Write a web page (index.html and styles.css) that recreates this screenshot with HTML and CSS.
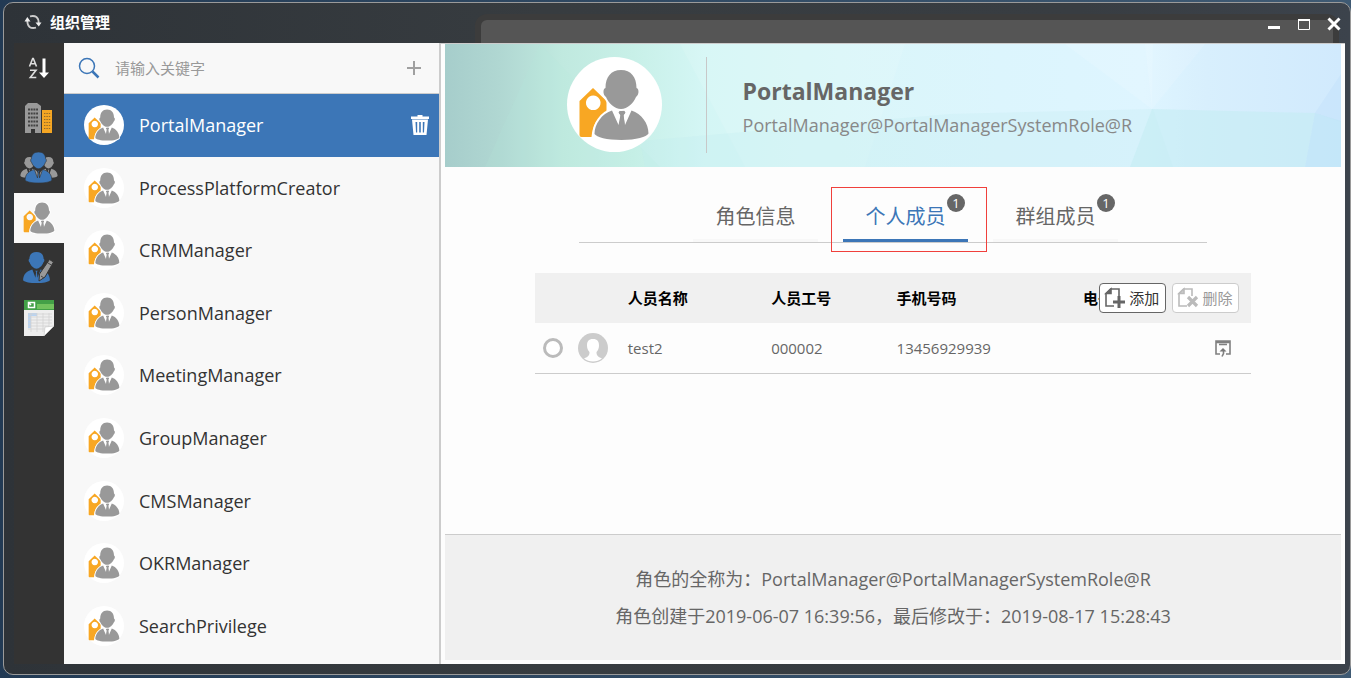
FILE: index.html
```html
<!DOCTYPE html>
<html lang="zh-CN">
<head>
<meta charset="utf-8">
<title>组织管理</title>
<link rel="stylesheet" href="styles.css">
</head>
<body>
<svg class="sprite" aria-hidden="true">
  <symbol id="person" viewBox="0 0 24 24">
    <path d="M12 0c3.700 0 5.500 2.200 5.500 5.300.9.300.7 2.300-.2 2.900C16.500 10.700 14 13 12 13s-4.500-2.300-5.300-4.800c-.9-.6-1.100-2.600-.2-2.900C6.500 2.200 8.300 0 12 0z"/>
    <path d="M8.800 13.500 11.200 20l.5-4.500-.7-1h2l-.7 1 .5 4.500 2.400-6.500c4.500 1.300 7 3.500 7.200 8.300-1.500 1.600-5.500 2.200-10.400 2.200S3 23.400 1.600 21.800c.2-4.800 2.700-7 7.200-8.300z"/>
  </symbol>
  <symbol id="role" viewBox="11 11 71 72">
    <path fill="#f8a723" fill-rule="evenodd" d="M12 43 25.500 30 39 43v12c-9 4-14 12-15 24H14q-2 0-2-2zM25.700 37.500a7.300 7.300 0 1 0 .1 0z"/>
    <g fill="#999" stroke="#fff" stroke-width="4" paint-order="stroke">
      <path d="M44.500 52.500 51 67l2-10-2-2.500 1.500-2h4l1.500 2-2 2.500 1.500 10L64 52.500c10 3 17 13 17 23C79 79 69 82 54 82s-25-3-27-6c0-10 7.500-20.500 17.500-23.500z" />
      <path d="M53.500 12c10 0 15.500 7 15.500 18 3 1 2.500 7-.5 9C66 45 60 51 53.500 51S41 45 38.500 39c-3-2-3.500-8-.5-9 0-11 5.500-18 15.500-18z"/>
    </g>
    <path fill="#999" d="M52.500 53h4l1 2-1.500 2.500 1 8.500-2.500 4-2.500-4 1-8.500-1.500-2.500z"/>
  </symbol>
</svg>

<div class="window">
  <div class="backdrop"></div>
  <header class="titlebar">
    <svg class="refresh" viewBox="0 0 18 16" fill="none" stroke="#ccc" stroke-width="1.800">
      <path d="M6 2.300Q14.500.5 14.700 9M12 13.700Q3.500 15.500 3.300 7"/>
      <path d="M11.500 8.500h6L14.800 12.500zM.500 7.500h6L3.300 3z" fill="#eee" stroke="none"/>
    </svg>
    <h1>组织管理</h1>
    <div class="controls">
      <button aria-label="最小化"><svg viewBox="0 0 14 14"><path d="M1 10.500h12" stroke="#fff" stroke-width="3"/></svg></button>
      <button aria-label="最大化"><svg viewBox="0 0 14 14"><path d="M1 3h12" stroke="#fff" stroke-width="2"/><path d="M1.500 3v9.500h11V3" fill="none" stroke="#fff"/></svg></button>
      <button aria-label="关闭"><svg viewBox="0 0 14 14"><path d="M1.500 1.500l11 11M12.500 1.500l-11 11" stroke="#fff" stroke-width="3"/></svg></button>
    </div>
  </header>

  <div class="workspace">
    <nav class="rail">
      <button aria-label="排序"><svg viewBox="0 0 32 32"><g fill="none" stroke="#ddd" stroke-width="1.600"><path d="M6.500 14.500l3.200-8h.6l3.200 8M7.700 11.800h4.600M7 18.300h6L7.300 25.500h6"/></g><path d="M19.500 6.500h3v14H26l-5 5.500-5-5.500h3.500z" fill="#fff"/></svg></button>
      <button aria-label="公司"><svg viewBox="0 0 32 32"><path fill="#999" d="M2 4l3-3h9l4 3v27H2z"/><path d="M5 7.500h10M5 11.500h10M5 15.500h10M5 19.500h10M5 23.500h10" stroke="#444" stroke-width="1.800" stroke-dasharray="2 .7"/><path d="M8 27h4v4H8z" fill="#333"/><path fill="#f5a623" d="M19 8h10v23H19z"/><path d="M21 11.500h7M21 14.500h7M21 17.500h7M21 20.500h7M21 23.500h7M21 26.500h7" stroke="#333" stroke-dasharray="1.400 1" opacity=".5"/></svg></button>
      <button aria-label="群组"><svg class="wide" viewBox="0 0 40 32"><g fill="#999"><use href="#person" x="0" y="5" width="21" height="21"/><use href="#person" x="19" y="5" width="21" height="21"/></g><use href="#person" x="4" y="0" width="31" height="31" fill="#3c76b7" stroke="#333" stroke-width=".5"/></svg></button>
      <button class="active" aria-label="角色"><svg viewBox="0 0 32 32"><use href="#role"/></svg></button>
      <button aria-label="个人"><svg viewBox="0 0 32 32"><use href="#person" x="-2" y="0" width="31" height="31" fill="#3c76b7"/><path fill="#999" stroke="#333" d="M26.500 7.500l4 2.500-8.500 15-6 4 .5-7z"/><path d="M25 11l4 2.500M18 24l3 2" stroke="#444"/></svg></button>
      <button aria-label="导入"><svg class="sheet" viewBox="0 0 32 38"><path fill="#eee" d="M1 1h30v26l-10 10H1z"/><path fill="#43a047" d="M1 1h30v10H1z"/><path fill="#72c25e" d="M14 5h17v5H14z"/><path d="M5.500 3.500h6v5h-6zM5 3l3 3" fill="none" stroke="#fff" stroke-width="1.500"/><path fill="#b8d4f4" d="M5 14h9v3H8v12H5z"/><path d="M5 15h24M5 18h24M5 21h24M5 24h24M5 27h21M5 30h17M8 14v19M14 14v19M20 14v19M26 14v14" stroke="#d2d2d2" stroke-width=".8"/><path fill="#fff" stroke="#bbb" stroke-width=".5" d="M31 27l-9 1-1 9z"/></svg></button>
    </nav>

    <aside class="roles">
      <form class="search">
        <button type="button" aria-label="搜索"><svg viewBox="0 0 22 22" fill="none" stroke="#3c76b7"><circle cx="9" cy="9" r="7.500" stroke-width="1.500"/><path d="M14.500 14.500l6 6" stroke-width="2.500"/></svg></button>
        <input type="text" aria-label="关键字" placeholder="请输入关键字">
        <button type="button" aria-label="新建"><svg viewBox="0 0 22 22"><path d="M11 4v14M4 11h14" stroke="#a0a0a0" stroke-width="2"/></svg></button>
      </form>
      <ul class="role-list">
        <li class="selected"><span class="avatar"><svg><use href="#role"/></svg></span><a href="#">PortalManager</a><button aria-label="删除角色"><svg viewBox="0 0 20 22"><path fill="#fff" fill-rule="evenodd" d="M7.500 1h5v1.500H19V5H1V2.500h6.500zM2 5.500h16L16.500 21h-13zM5.500 8l.5 10.500h1.200V8zM9.200 8v10.500h1.600V8zM12.800 8v10.500H14l.5-10.500z"/></svg></button></li>
        <li><span class="avatar"><svg><use href="#role"/></svg></span><a href="#">ProcessPlatformCreator</a></li>
        <li><span class="avatar"><svg><use href="#role"/></svg></span><a href="#">CRMManager</a></li>
        <li><span class="avatar"><svg><use href="#role"/></svg></span><a href="#">PersonManager</a></li>
        <li><span class="avatar"><svg><use href="#role"/></svg></span><a href="#">MeetingManager</a></li>
        <li><span class="avatar"><svg><use href="#role"/></svg></span><a href="#">GroupManager</a></li>
        <li><span class="avatar"><svg><use href="#role"/></svg></span><a href="#">CMSManager</a></li>
        <li><span class="avatar"><svg><use href="#role"/></svg></span><a href="#">OKRManager</a></li>
        <li><span class="avatar"><svg><use href="#role"/></svg></span><a href="#">SearchPrivilege</a></li>
      </ul>
    </aside>

    <main class="detail">
      <section class="banner">
        <svg class="facets" viewBox="0 0 896 123" preserveAspectRatio="none" aria-hidden="true">
          <path fill="#b5e8dd" opacity=".15" d="M95 0L215 123H40z"/>
          <path fill="#fff" opacity=".1" d="M235 0h225l-40 123H300z"/>
          <path fill="#bfeaf0" opacity=".25" d="M195 97l230-20 80-7 203-5 20 58H200z"/>
          <path fill="#fff" opacity=".12" d="M620 0h88l-1 65z"/>
          <path fill="#fff" opacity=".12" d="M700 0h60l-53 65z"/>
          <path fill="#c4edf3" opacity=".6" d="M707 65l163 4-10 54H685z"/>
          <path fill="#c3e2fc" opacity=".5" d="M896 30v48l-26-9z"/>
          <path fill="#bfe6f7" opacity=".7" d="M870 69l26 8v46h-36z"/>
        </svg>
        <div class="banner-content">
          <span class="portrait"><svg><use href="#role"/></svg></span>
          <div class="identity">
            <h2>PortalManager</h2>
            <p>PortalManager@PortalManagerSystemRole@R</p>
          </div>
        </div>
      </section>

      <div class="tabs" role="tablist">
        <button role="tab">角色信息</button>
        <button role="tab" class="active" aria-selected="true">个人成员<span class="badge">1</span></button>
        <button role="tab">群组成员<span class="badge">1</span></button>
      </div>

      <section class="members">
        <table>
          <thead>
            <tr><th class="col-pick"></th><th class="col-face"></th><th class="col-name">人员名称</th><th class="col-id">人员工号</th><th class="col-phone">手机号码</th><th><span class="clipped">电子</span></th></tr>
          </thead>
          <tbody>
            <tr>
              <td><input type="radio" class="pick" aria-label="选择 test2"></td>
              <td><svg class="face" viewBox="0 0 30 30"><circle cx="15" cy="15" r="15" fill="#ccc"/><path fill="#fff" d="M15 6c4.500 0 6 2.500 6 6.500 0 3-1 5-2.500 6.500 0 3.500 1 4.500 5.500 6.500-5 4-13 4-18 0 4.500-2 5.500-3 5.500-6.500C10 17.500 9 15.500 9 12.500 9 8.500 10.500 6 15 6z"/></svg></td>
              <td>test2</td><td>000002</td><td>13456929939</td>
              <td class="open"><button aria-label="打开"><svg viewBox="0 0 18 18" fill="none" stroke="#808080" stroke-width="1.600"><path d="M6 15H2V2h14v13h-4M2 3.500h14M5 5.500h8M9.500 11v3.500L8 17.500"/><path d="M5.500 12.500L9 9l3.500 3.500z" fill="#777" stroke="none"/></svg></button></td>
            </tr>
          </tbody>
        </table>
        <div class="actions">
          <button class="add"><svg viewBox="0 0 22 22" fill="none" stroke="#666" stroke-width="1.600"><path d="M10 19H2V6.500L6.500 2H15v7"/><path d="M2 6.500h5V2z" fill="#666"/><path d="M15 9v12M9 15h12" stroke-width="3"/></svg>添加</button>
          <button class="remove" disabled><svg viewBox="0 0 22 22" fill="none" stroke="#bbb" stroke-width="1.600"><path d="M10 19H2V6.500L6.500 2H15v7"/><path d="M2 6.500h5V2z" fill="#ccc"/><path d="M11 10l9 9M20 10l-9 9" stroke-width="3.200"/></svg>删除</button>
        </div>
      </section>

      <footer class="summary">
        <p>角色的全称为：PortalManager@PortalManagerSystemRole@R</p>
        <p>角色创建于2019-06-07 16:39:56，最后修改于：2019-08-17 15:28:43</p>
      </footer>
    </main>
  </div>
</div>
</body>
</html>
```
FILE: styles.css
```css
* { box-sizing: border-box; }

body {
  margin: 0;
  min-height: 100vh;
  display: flex;
  padding: 2px 0 3px 3px;
  background: linear-gradient(90deg, #223a54, #3f5a73);
  color: #333;
  font: 15px/20px "Open Sans", "Noto Sans CJK SC", sans-serif;
}

button {
  display: flex;
  align-items: center;
  justify-content: center;
  padding: 0;
  border: 0;
  background: none;
  font: inherit;
  color: inherit;
}

h1, h2, p, ul { margin: 0; padding: 0; }
a { color: inherit; text-decoration: none; }
.sprite { position: absolute; width: 0; height: 0; }

.window {
  position: relative;
  flex: 1;
  display: flex;
  flex-direction: column;
  padding: 0 5px 10px 10px;
  border: 1px solid #9a9a9a;
  border-radius: 10px;
  background: linear-gradient(90deg, #2e3338, #373c40 40%, #383d42 80%, #3c434c);
}

.backdrop {
  position: absolute;
  top: 11px;
  left: 35%;
  right: 11px;
  height: 60px;
  border: 6px solid #3c3c3c;
  border-radius: 12px;
  background: #555;
}

.titlebar {
  position: relative;
  display: flex;
  align-items: center;
  height: 40px;
  padding: 0 4px 2px 10px;
}
.refresh { width: 18px; height: 16px; margin-right: 8px; }
.titlebar h1 { font-size: 15px; line-height: 20px; color: #fff; }
.controls { display: flex; gap: 16px; margin: 4px 0 0 auto; }
.controls svg { display: block; width: 14px; height: 14px; }

.workspace { position: relative; flex: 1; display: flex; }

.rail { width: 50px; background: #333; }
.rail button { width: 50px; height: 50px; }
.rail svg { width: 32px; height: 32px; }
.rail .wide { width: 40px; }
.rail .sheet { height: 38px; }
.rail .active { background: #f8f8f8; }

.roles {
  display: flex;
  flex-direction: column;
  width: 377px;
  border-right: 2px solid #ccc;
  background: #f8f8f8;
}
.search {
  display: flex;
  align-items: center;
  height: 51px;
  padding: 0 14px;
  border-bottom: 1px solid #ccc;
}
.search svg { width: 22px; height: 22px; }
.search input {
  flex: 1;
  padding: 0 15px;
  border: 0;
  background: none;
  font: inherit;
}
.search input::placeholder { color: #999; }

.role-list {
  flex: 1;
  display: grid;
  grid-auto-rows: 1fr;
  padding-bottom: 7px;
  list-style: none;
}
.role-list li {
  display: flex;
  align-items: center;
  gap: 15px;
  min-height: 48px;
  padding: 0 9px 0 20px;
  font-size: 18px;
}
.role-list a { flex: 1; }
.role-list .selected { background: #3c76b7; color: #fff; }
.role-list button svg { width: 20px; height: 22px; }

.avatar, .portrait {
  display: flex;
  align-items: center;
  justify-content: center;
  border-radius: 50%;
  background: #fff;
}
.avatar { width: 40px; height: 40px; }
.avatar svg { width: 32px; height: 32px; }
.portrait { width: 95px; height: 95px; }
.portrait svg { width: 72px; height: 72px; }

.detail {
  flex: 1;
  display: flex;
  flex-direction: column;
  min-width: 0;
  padding: 0 4px 4px;
  border-top: 1px solid #ccc;
  background: #fdfdfd;
}

.banner {
  position: relative;
  height: 123px;
  background: linear-gradient(90deg, #a6cdcb, #b0d7d2 6%, #c0e9df 13%, #c8f0e8 21%, #d4f6f5 29%, #daf6f9 44%, #dcf5fd 62%, #def5ff 78%, #d8effd 85%, #d1eafd);
}
.facets { position: absolute; width: 100%; height: 100%; }
.banner-content {
  position: relative;
  display: flex;
  align-items: center;
  width: 80%;
  height: 100%;
  margin: 0 auto;
  padding: 0 0 2px 32px;
}
.identity {
  display: flex;
  flex-direction: column;
  justify-content: center;
  height: 96px;
  margin-left: 44px;
  padding: 6px 0 0 36px;
  border-left: 1px solid #c8c8c8;
}
.identity h2 { font-size: 23px; line-height: 34px; color: #666; }
.identity p { font-size: 18px; line-height: 34px; color: #888; }

.tabs {
  display: flex;
  justify-content: center;
  gap: 25px;
  width: 70%;
  margin: 22px auto 0;
  padding-left: 25px;
  border-bottom: 1px solid #ccc;
}
.tabs button {
  position: relative;
  width: 125px;
  height: 53px;
  padding-top: 5px;
  border-bottom: 3px solid #f8f8f8;
  font-size: 20px;
  color: #666;
}
.tabs .active { border-color: #3c76b7; color: #3c76b7; }
.tabs .active::after {
  content: "";
  position: absolute;
  inset: -2px -19px -13px -12px;
  border: 1px solid #f0403c;
}
.badge {
  position: absolute;
  top: 5px;
  right: 3px;
  width: 18px;
  height: 18px;
  border-radius: 50%;
  background: #666;
  color: #fff;
  font-size: 13px;
  line-height: 18px;
}

.members { position: relative; width: 80%; margin: 30px auto; }
.members table {
  width: 100%;
  table-layout: fixed;
  border-collapse: collapse;
  color: #666;
}
.members th, .members td { height: 50px; padding: 0; text-align: left; }
.members th { background: #f0f0f0; color: #000; }
.members tbody tr { border-bottom: 1px solid #ccc; }
.col-pick { width: 6%; }
.col-face { width: 7%; }
.col-name { width: 20%; }
.col-id { width: 17.5%; }
.col-phone { width: 26%; }
.clipped {
  display: block;
  width: 16px;
  overflow: hidden;
  white-space: nowrap;
}
.pick {
  appearance: none;
  display: block;
  width: 20px;
  height: 20px;
  margin: 0 0 0 8px;
  border: 3px solid #bbb;
  border-radius: 50%;
  background: #fff;
}
.face { display: block; width: 30px; height: 30px; }
.open button { margin: 0 19px 0 auto; }
.open svg { display: block; width: 18px; height: 18px; }

.actions {
  position: absolute;
  top: 10px;
  right: 12px;
  display: flex;
  gap: 6px;
}
.actions button {
  gap: 3px;
  height: 30px;
  padding: 0 6px 0 4px;
  border: 1px solid #666;
  border-radius: 4px;
  background: #fff;
}
.actions svg { width: 22px; height: 22px; }
.actions .remove { border-color: #ccc; color: #999; }

.summary {
  margin-top: auto;
  padding: 26px 0 25px;
  border-top: 1px solid #ccc;
  background: #f0f0f0;
  color: #666;
  font-size: 18px;
  line-height: 37px;
  text-align: center;
}
```
